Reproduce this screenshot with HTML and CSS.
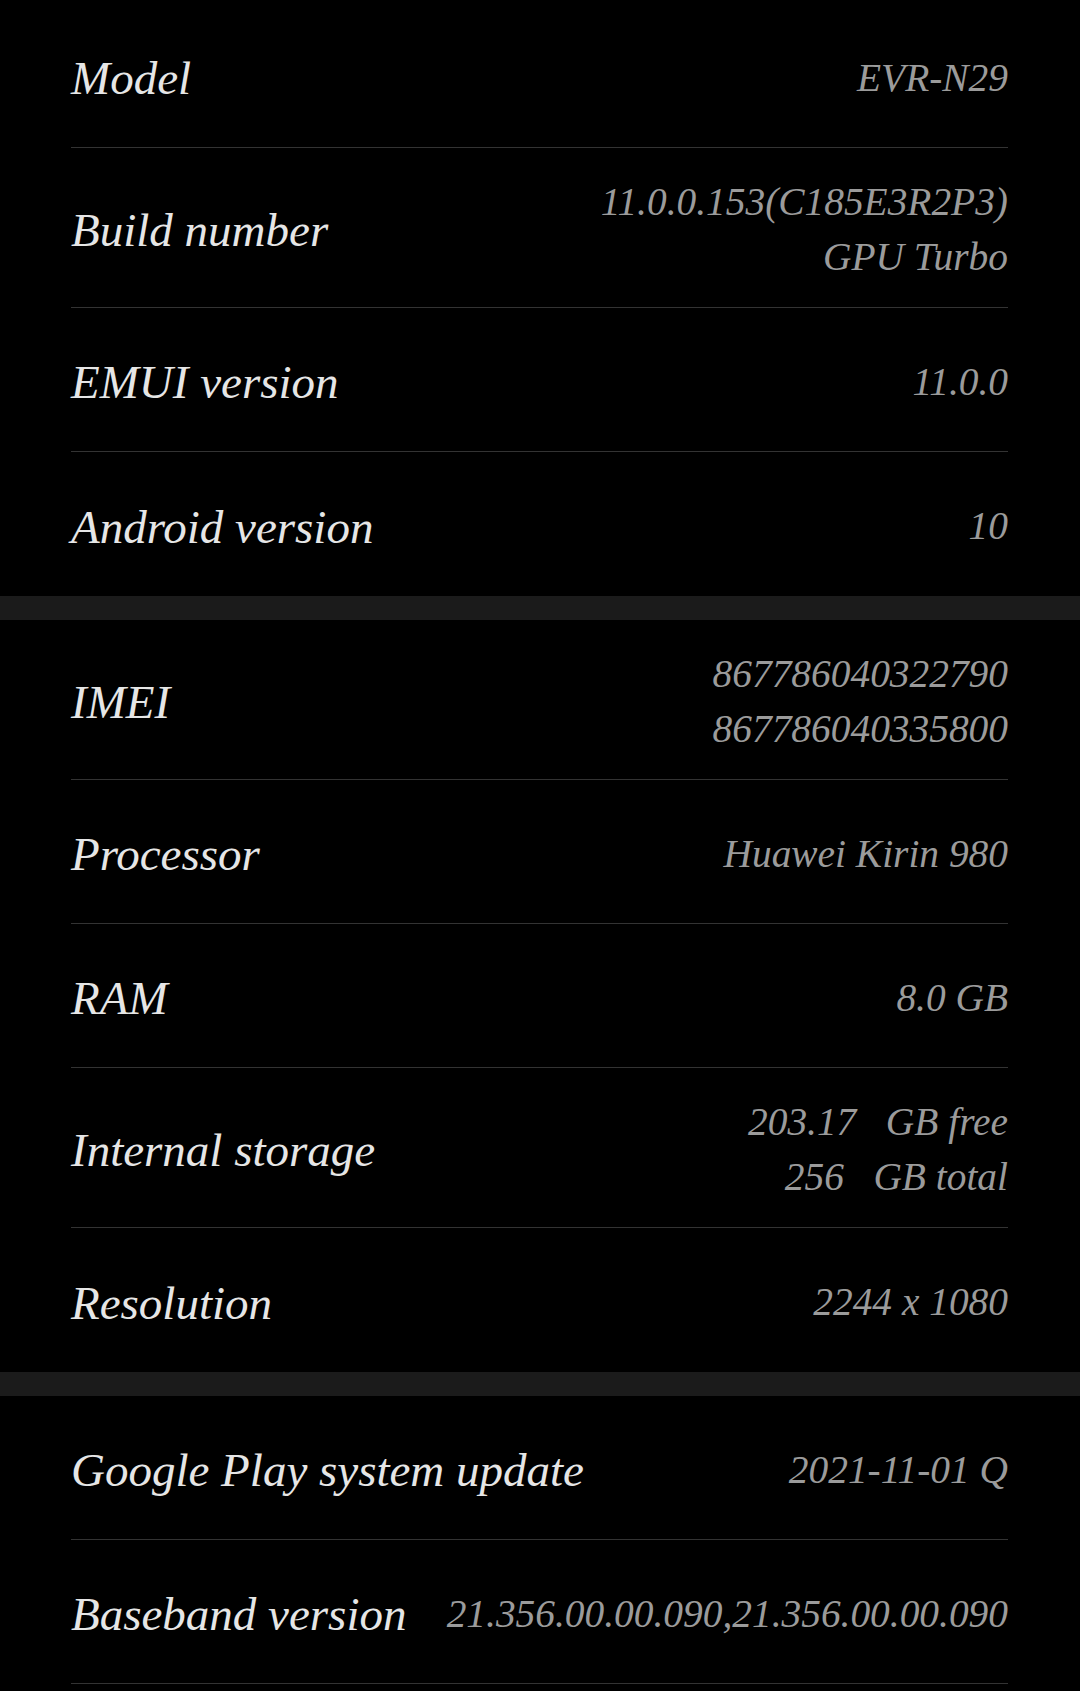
FILE: index.html
```html
<!DOCTYPE html>
<html>
<head>
<meta charset="utf-8">
<link rel="stylesheet" href="styles.css">
</head>
<body>
<div class="screen">
  <section class="group first">
    <div class="row"><span class="label">Model</span><span class="value">EVR-N29</span></div>
    <div class="row"><span class="label">Build number</span><span class="value">11.0.0.153(C185E3R2P3)<br>GPU Turbo</span></div>
    <div class="row"><span class="label">EMUI version</span><span class="value">11.0.0</span></div>
    <div class="row"><span class="label">Android version</span><span class="value">10</span></div>
  </section>
  <div class="band"></div>
  <section class="group">
    <div class="row"><span class="label">IMEI</span><span class="value">867786040322790<br>867786040335800</span></div>
    <div class="row"><span class="label">Processor</span><span class="value">Huawei Kirin 980</span></div>
    <div class="row"><span class="label">RAM</span><span class="value">8.0 GB</span></div>
    <div class="row"><span class="label">Internal storage</span><span class="value pre">203.17   GB free<br>256   GB total</span></div>
    <div class="row"><span class="label">Resolution</span><span class="value">2244 x 1080</span></div>
  </section>
  <div class="band"></div>
  <section class="group open">
    <div class="row"><span class="label">Google Play system update</span><span class="value">2021-11-01 Q</span></div>
    <div class="row"><span class="label">Baseband version</span><span class="value">21.356.00.00.090,21.356.00.00.090</span></div>
  </section>
</div>
</body>
</html>
```
FILE: styles.css
```css
html, body {
  margin: 0;
  padding: 0;
  background: #000;
}
.screen {
  width: 1080px;
  height: 1691px;
  overflow: hidden;
  background: #000;
  font-family: "Liberation Serif", "Times New Roman", serif;
  font-style: italic;
}
.group {
  padding: 0 72px 0 71px;
}
.group.first {
  padding-top: 4px;
}
.row {
  box-sizing: border-box;
  min-height: 144px;
  padding: 27px 0 22px;
  display: flex;
  align-items: center;
  justify-content: space-between;
  gap: 30px;
  border-bottom: 1px solid #333333;
}
.group .row:last-child {
  border-bottom: none;
}
.group.open .row:last-child {
  border-bottom: 1px solid #333333;
}
.label {
  font-size: 47px;
  line-height: 56px;
  color: #e6e6e6;
  white-space: nowrap;
}
.value {
  font-size: 39.4px;
  line-height: 55px;
  color: #9b9b9b;
  text-align: right;
  white-space: nowrap;
}
.value.pre {
  white-space: pre;
}
.band {
  height: 24px;
  background: #1b1b1b;
}
```
